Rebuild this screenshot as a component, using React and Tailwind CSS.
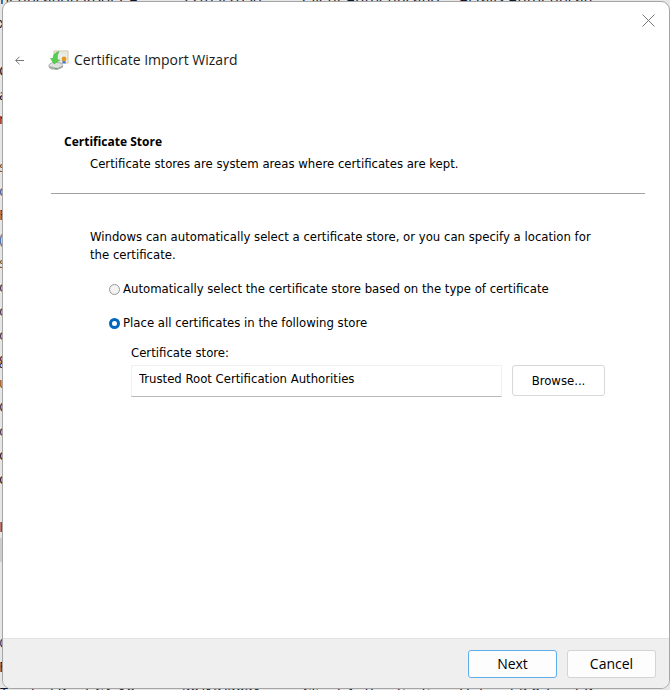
import React, { useState } from 'react';

const topRow = ['hentication Root CA', '22/09/2030', 'Client Authenticatio', 'Actalis Authenticati'];
const bottomRow = ['Trusted Root CA-10', '30/12/2021', 'Client Authenticatio', 'Hotspot 2.0 Trust Ro'];

// first characters of the list rows that stick out on the left of the dialog
const edge = [
  { id: 1, text: 'x', style: 'text-slate-900' },
  { id: 2, text: '', style: '' },
  { id: 3, text: 'C', style: 'text-slate-900' },
  { id: 4, text: 'a', style: 'text-slate-900' },
  { id: 5, text: 'n', style: 'text-[#5c0a20]' },
  { id: 6, text: '', style: '' },
  { id: 7, text: 's', style: 'text-[#7a4a20]' },
  { id: 8, text: 'ol', style: 'text-[#1a5c9c]' },
  { id: 9, text: 'F', style: 'text-[#5c2020]' },
  { id: 10, text: '(c', style: 'text-[#3a6ca0]' },
  { id: 11, text: 's', style: 'text-[#6b5030]' },
  { id: 12, text: 'c', style: 'text-[#1c3458]' },
  { id: 13, text: 'c', style: 'text-[#1c3458]' },
  { id: 14, text: 'c', style: 'text-[#1c3458]' },
  { id: 15, text: 'g', style: 'text-[#3a2438]' },
  { id: 16, text: 'u', style: 'text-[#7a4a20]' },
  { id: 17, text: 'C', style: 'text-[#1c3458]' },
  { id: 18, text: 'c', style: 'text-[#1c3458]' },
  { id: 19, text: 'o', style: 'text-slate-900' },
  { id: 20, text: 'o', style: 'text-slate-900' },
  { id: 21, text: '', style: '' },
  { id: 22, text: 'I', style: 'text-[#3a2050]' },
  { id: 23, text: '', style: 'bg-[#cccccc]' },
  { id: 24, text: '', style: '' },
  { id: 25, text: '', style: '' },
  { id: 26, text: '', style: '-mb-1' },
  { id: 27, text: 'C', style: 'text-[#1c4478]' },
  { id: 28, text: 'F', style: 'text-slate-900' },
];

function BackgroundRow({ cells }) {
  return (
    <div className="grid h-6 grid-cols-[182px_120px_157px_1fr] text-[15px] leading-6 whitespace-nowrap text-slate-900">
      {cells.map((cell) => (
        <span key={cell}>{cell}</span>
      ))}
    </div>
  );
}

function CertificateWindow() {
  return (
    <div
      aria-hidden="true"
      className="absolute inset-0 flex flex-col justify-between overflow-hidden bg-[#e6e6e6] font-['Open_Sans',sans-serif]"
    >
      <div className="-mt-[14px]">
        <BackgroundRow cells={topRow} />
        {edge.map((row) => (
          <div key={row.id} className={`-ml-px h-6 w-1 text-[15px] leading-6 ${row.style}`}>
            {row.text}
          </div>
        ))}
      </div>
      <div className="-mb-[14px]">
        <BackgroundRow cells={bottomRow} />
      </div>
    </div>
  );
}

function WizardIcon() {
  return (
    <svg width="21" height="21" viewBox="0 0 21 21" aria-hidden="true">
      <path d="M6 1h14v12H6z" fill="#f6f1e6" stroke="#cdc3ae" />
      <path d="M8 3h10v8H8z" fill="#e9edf0" stroke="#ddd8cc" strokeWidth=".6" />
      <path d="M14.500 9v5l1.500-1 1.500 1V9z" fill="#3a72d0" />
      <circle cx="16" cy="9" r="2.400" fill="#e59a1c" />
      <path d="M1 14.500l4-2.500 8 1 2 3-5 3H3l-2-2z" fill="#dfe1e0" stroke="#9a9f9d" strokeWidth=".7" />
      <path d="M1 16l8 2 6-2.500v2L9 20l-8-2z" fill="#a5aaa8" />
      <path d="M11 1.500c-4 1-6 3.500-6 7H2.500L6 14l6-4H9.500c-.5-3 0-6 1.500-8.500z" fill="#58cf4c" stroke="#3fae3c" strokeWidth=".5" />
      <path d="M7 18h2v1H7z" fill="#43b53c" />
    </svg>
  );
}

function BackIcon() {
  return (
    <svg width="9" height="9" viewBox="0 0 9 9" fill="none" stroke="#777" strokeWidth="1" aria-hidden="true">
      <path d="M.7 4.500H9M4.500.7.7 4.500l3.800 3.800" />
    </svg>
  );
}

function CloseIcon() {
  return (
    <svg width="13" height="13" viewBox="0 0 13 13" stroke="#777" strokeWidth="1" aria-hidden="true">
      <path d="M.5.5l12 12M12.500.5l-12 12" />
    </svg>
  );
}

function StoreOption({ value, label, store, onChange }) {
  return (
    <label className="flex h-5 items-center gap-[3px]">
      <input
        type="radio"
        name="store"
        value={value}
        checked={store === value}
        onChange={() => onChange(value)}
        className="size-[11px] shrink-0 appearance-none rounded-full border border-[#999] bg-[#f3f3f3] checked:border-[3px] checked:border-[#0067c0] checked:bg-white"
      />
      {label}
    </label>
  );
}

export default function App() {
  const [store, setStore] = useState('manual');

  return (
    <div className="relative flex min-h-screen flex-col pt-[1px] pb-[1px] pl-[2px] font-['DejaVu_Sans_Condensed','Noto_Sans',sans-serif] text-[13px] text-black">
      <CertificateWindow />

      <main className="relative flex flex-1 flex-col overflow-hidden rounded-[9px] border border-[#a5a5a5] bg-white">
        <div className="flex h-9 justify-end">
          <button type="button" aria-label="Close" className="mt-3 mr-[14px] h-[13px]">
            <CloseIcon />
          </button>
        </div>

        <header className="flex h-11 items-center pl-3">
          <button type="button" aria-label="Back">
            <BackIcon />
          </button>
          <span className="ml-6">
            <WizardIcon />
          </span>
          <h1 className="ml-[5px] font-['Open_Sans',sans-serif] text-sm text-[#1a1a1a]">Certificate Import Wizard</h1>
        </header>

        <section className="mt-[50px] mr-6 ml-12 border-b border-[#a0a0a0] pb-[17px] pl-[13px]">
          <h2 className="font-['Open_Sans',sans-serif] text-xs leading-5 font-bold">Certificate Store</h2>
          <p className="pl-[26px] leading-6">Certificate stores are system areas where certificates are kept.</p>
        </section>

        <form id="wizard" className="flex-1 pt-[34px] pr-16 pl-[87px]" onSubmit={(e) => e.preventDefault()}>
          <p className="leading-[18px]">
            Windows can automatically select a certificate store, or you can specify a location for the certificate.
          </p>

          <div className="mt-[15px] ml-[19px] flex flex-col gap-[14px]">
            <StoreOption
              value="auto"
              label="Automatically select the certificate store based on the type of certificate"
              store={store}
              onChange={setStore}
            />
            <StoreOption
              value="manual"
              label="Place all certificates in the following store"
              store={store}
              onChange={setStore}
            />
          </div>

          <label htmlFor="store-name" className="mt-[10px] ml-[41px] block leading-5">
            Certificate store:
          </label>
          <div className="mt-[2px] ml-[41px] flex gap-[10px]">
            <input
              id="store-name"
              type="text"
              readOnly
              value="Trusted Root Certification Authorities"
              className="h-8 min-w-0 flex-1 border border-[#f0f0f0] border-b-[#b8b8b8] px-[7px] pb-[6px] outline-none"
            />
            <button type="button" className="h-[31px] w-[93px] rounded-[3px] border border-[#d8d8d8]">
              Browse...
            </button>
          </div>
        </form>

        <footer className="flex h-[50px] items-center justify-end gap-[10px] border-t border-[#e2e2e2] bg-[#efefef] pr-[13px] font-['Open_Sans',sans-serif] text-sm">
          <button
            type="submit"
            form="wizard"
            className="h-7 w-[89px] rounded-[3px] border border-[#60aee8] bg-[#fdfdfd]"
          >
            Next
          </button>
          <button type="button" className="h-7 w-[89px] rounded-[3px] border border-[#d4d4d4] bg-[#fdfdfd]">
            Cancel
          </button>
        </footer>
      </main>
    </div>
  );
}
